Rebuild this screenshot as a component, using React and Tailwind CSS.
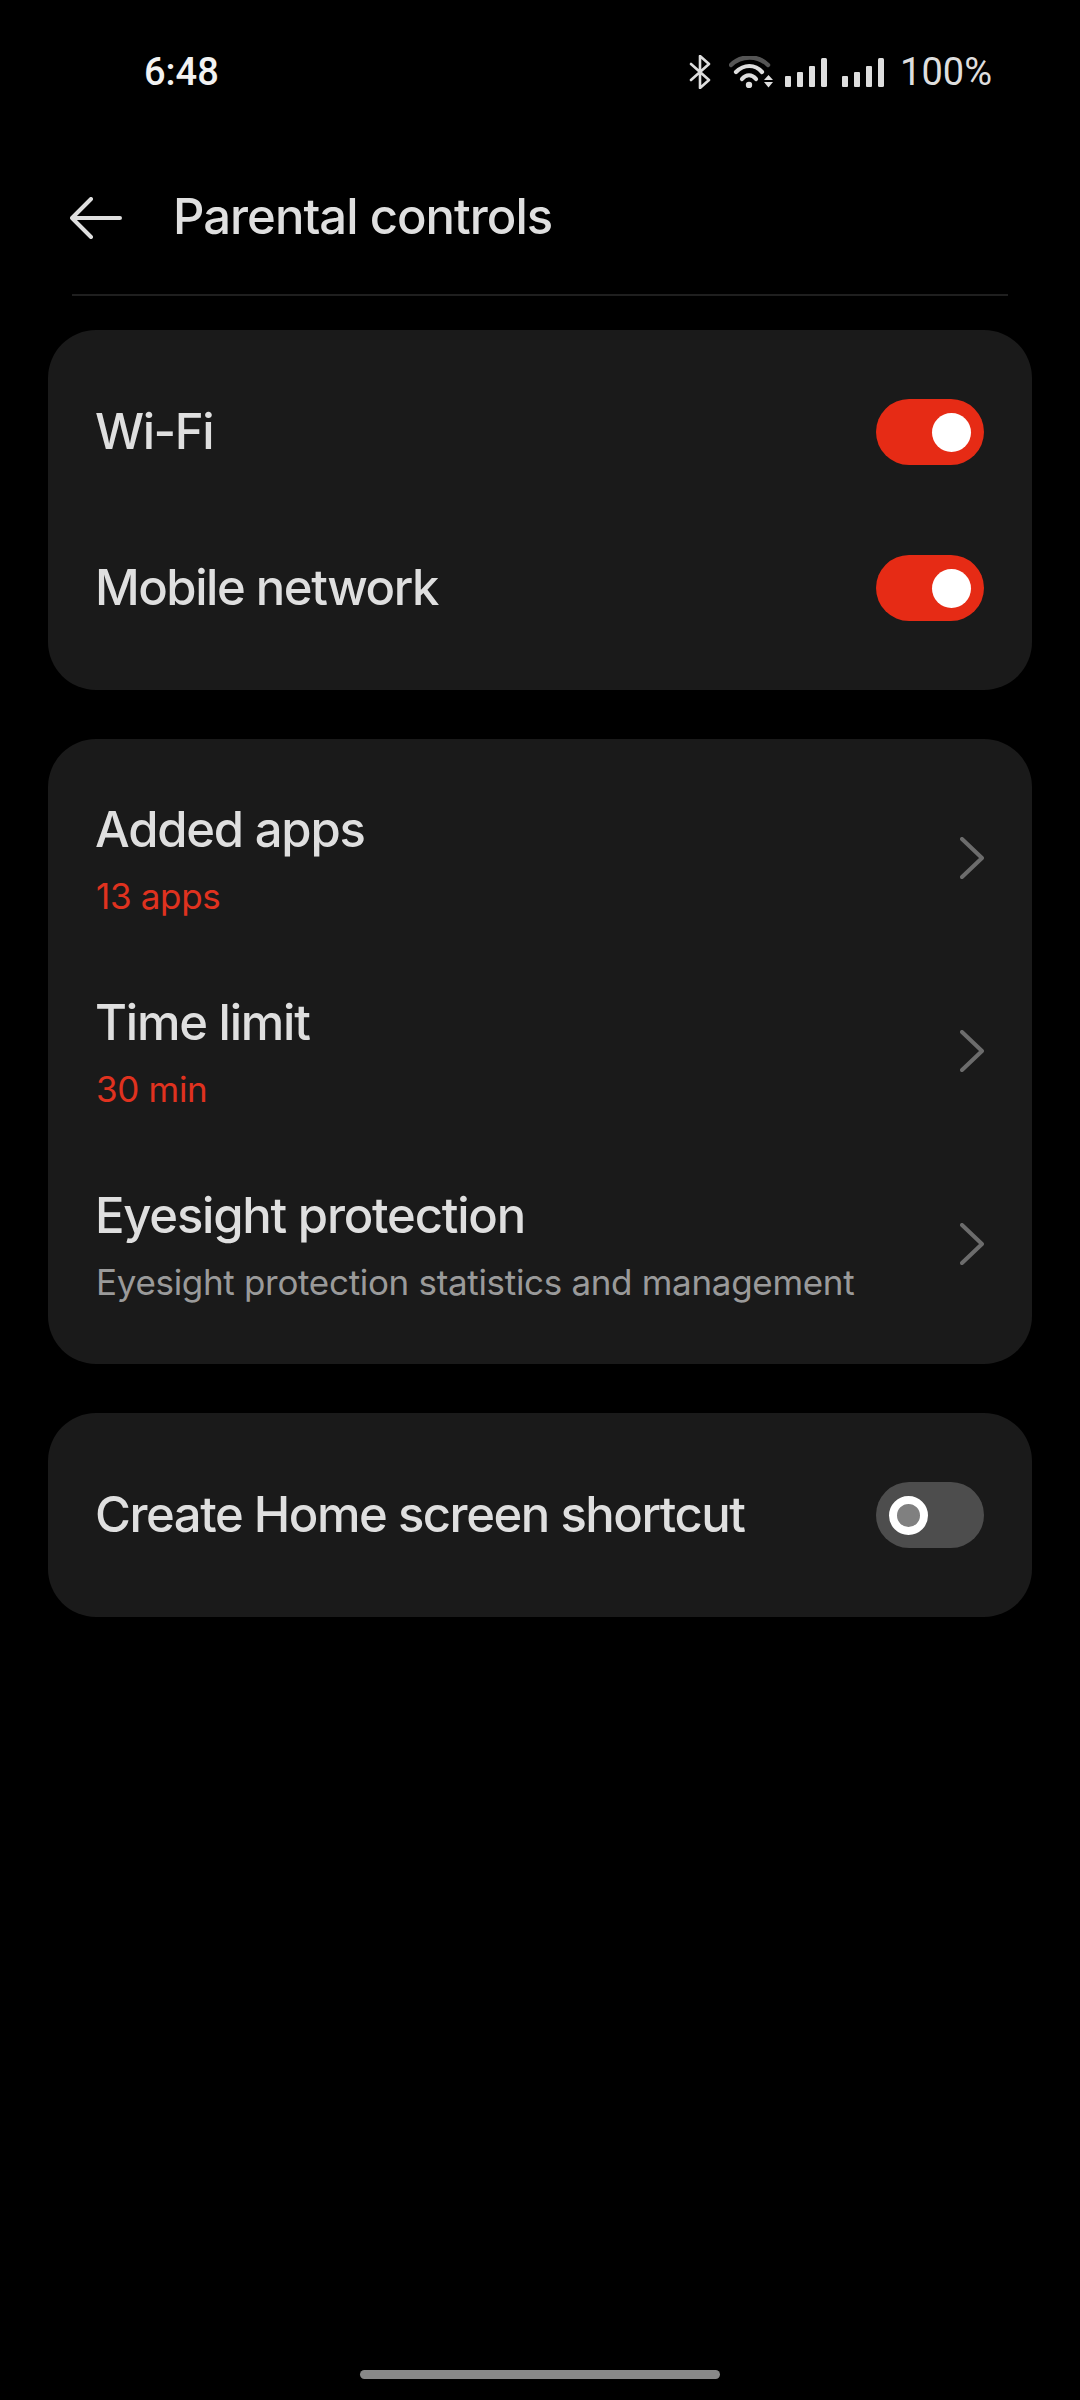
function Toggle({ on }) {
  if (on) {
    return (
      <div className="flex h-[66px] w-[108px] shrink-0 items-center justify-end rounded-full bg-[#e62b15] pr-[13px]">
        <div className="h-[39px] w-[39px] rounded-full bg-white"></div>
      </div>
    );
  }
  return (
    <div className="flex h-[66px] w-[108px] shrink-0 items-center rounded-full bg-[#4d4d4d] pl-[13px]">
      <div className="h-[39px] w-[39px] rounded-full border-[8px] border-white bg-[#808080]"></div>
    </div>
  );
}

function ToggleRow({ label, on, height }) {
  return (
    <div className={`flex items-center justify-between pl-[47px] pr-[48px] ${height}`}>
      <span className="pb-[2px] text-[49px] font-medium leading-none tracking-[-0.03em] text-[#dfdfdf]">{label}</span>
      <Toggle on={on} />
    </div>
  );
}

function Chevron() {
  return (
    <svg width="24" height="42" viewBox="0 0 24 42" fill="none" stroke="#6c6c6c" strokeWidth="4" strokeLinecap="round" strokeLinejoin="round" className="mb-[2px]">
      <path d="M2 2l20 19L2 40" />
    </svg>
  );
}

function LinkRow({ title, sub, subColor }) {
  return (
    <div className="flex h-[193px] items-center justify-between pl-[47px] pr-[48px]">
      <div className="flex flex-col pt-[2px]">
        <span className="text-[49px] font-medium leading-[60px] tracking-[-0.025em] text-[#dfdfdf]">{title}</span>
        <span className={`mt-[13px] pl-[1px] text-[35px] leading-[46px] tracking-[-0.009em] ${subColor}`}>{sub}</span>
      </div>
      <Chevron />
    </div>
  );
}

function SignalBars() {
  return (
    <svg width="42" height="29" viewBox="0 0 42 29" fill="#dedede">
      <rect x="0" y="18" width="6" height="11" rx="1" />
      <rect x="12" y="14" width="6" height="15" rx="1" />
      <rect x="24" y="8" width="6" height="21" rx="1" />
      <rect x="36" y="0" width="6" height="29" rx="1.5" />
    </svg>
  );
}

function StatusIcons() {
  return (
    <div className="flex items-center">
      <svg width="22" height="34" viewBox="0 0 22 34" fill="none" stroke="#dedede" strokeWidth="2.6" className="mr-[18px]">
        <path d="M2 9l18 16-9 8V1l9 8L2 25" strokeLinejoin="round" strokeLinecap="round" />
      </svg>
      <svg width="44" height="32" viewBox="0 0 44 32" fill="none" className="mr-[12px]">
        <path d="M2 9C12 -1 29 -1 39 9" stroke="#555" strokeWidth="4.5" strokeLinecap="round" />
        <path d="M7 16C15 8 26 8 33 16" stroke="#dedede" strokeWidth="4.2" strokeLinecap="round" />
        <path d="M13 23C17 18 23 18 27 23" stroke="#dedede" strokeWidth="4.2" strokeLinecap="round" />
        <circle cx="20" cy="29" r="3.2" fill="#dedede" />
        <path d="M39.5 19l4.5 5H35zM35 26h9l-4.5 5.500z" fill="#dedede" />
      </svg>
      <SignalBars />
      <div className="w-[15px]"></div>
      <SignalBars />
      <span className="ml-[16px] font-['Roboto',sans-serif] text-[38px] leading-none text-[#dedede]">100%</span>
    </div>
  );
}

export default function App() {
  return (
    <div className="flex h-[2400px] w-[1080px] flex-col overflow-hidden bg-black font-['Inter','Liberation_Sans',sans-serif]">
      {/* Status bar */}
      <div className="flex h-[144px] items-center justify-between pl-[144px] pr-[88px]">
        <span className="font-['Roboto',sans-serif] text-[38px] font-medium leading-none text-[#f2f2f2]">6:48</span>
        <StatusIcons />
      </div>

      {/* Header */}
      <div className="flex h-[150px] items-center pl-[70px]">
        <svg width="52" height="42" viewBox="0 0 52 42" fill="none" stroke="#dfdfdf" strokeWidth="4" strokeLinecap="round" strokeLinejoin="round" className="mb-[2px]">
          <path d="M50 21H2M21 2L2 21l19 19" />
        </svg>
        <span className="mb-[5px] ml-[51px] text-[49px] font-medium leading-none tracking-[-0.02em] text-[#dfdfdf]">Parental controls</span>
      </div>
      <div className="mx-[72px] h-[2px] bg-[#1f1f1f]"></div>

      <div className="mt-[34px] flex flex-col gap-[49px] px-[48px]">
        <div className="rounded-[48px] bg-[#1a1a1a] py-[24px]">
          <ToggleRow label="Wi-Fi" on height="h-[156px]" />
          <ToggleRow label="Mobile network" on height="h-[156px]" />
        </div>

        <div className="rounded-[48px] bg-[#1a1a1a] py-[23px]">
          <LinkRow title="Added apps" sub="13 apps" subColor="text-[#e0321f]" />
          <LinkRow title="Time limit" sub="30 min" subColor="text-[#e0321f]" />
          <LinkRow
            title="Eyesight protection"
            sub="Eyesight protection statistics and management"
            subColor="text-[#9a9a9a]"
          />
        </div>

        <div className="rounded-[48px] bg-[#1a1a1a]">
          <ToggleRow label="Create Home screen shortcut" height="h-[204px]" />
        </div>
      </div>

      {/* Gesture bar */}
      <div className="mt-auto mb-[21px] flex justify-center">
        <div className="h-[9px] w-[360px] rounded-full bg-[#888888]"></div>
      </div>
    </div>
  );
}
